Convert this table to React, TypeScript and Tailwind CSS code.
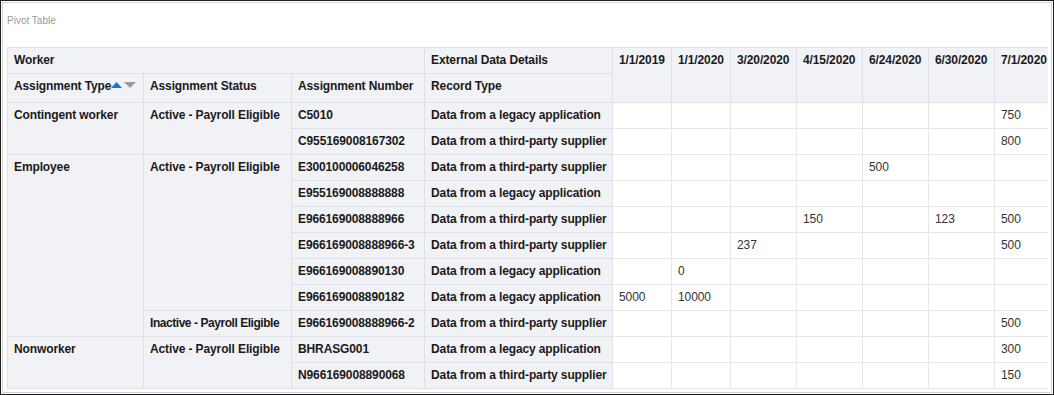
import React from "react";

type Row = {
  type?: { label: string; span: number };
  status?: { label: string; span: number };
  number: string;
  record: string;
  values: (string | number | null)[];
};

const dates = ["1/1/2019", "1/1/2020", "3/20/2020", "4/15/2020", "6/24/2020", "6/30/2020", "7/1/2020"];
const LEGACY = "Data from a legacy application";
const THIRD = "Data from a third-party supplier";

const rows: Row[] = [
  { type: { label: "Contingent worker", span: 2 }, status: { label: "Active - Payroll Eligible", span: 2 }, number: "C5010", record: LEGACY, values: [null, null, null, null, null, null, 750] },
  { number: "C955169008167302", record: THIRD, values: [null, null, null, null, null, null, 800] },
  { type: { label: "Employee", span: 7 }, status: { label: "Active - Payroll Eligible", span: 6 }, number: "E300100006046258", record: THIRD, values: [null, null, null, null, 500, null, null] },
  { number: "E955169008888888", record: LEGACY, values: [null, null, null, null, null, null, null] },
  { number: "E966169008888966", record: THIRD, values: [null, null, null, 150, null, 123, 500] },
  { number: "E966169008888966-3", record: THIRD, values: [null, null, 237, null, null, null, 500] },
  { number: "E966169008890130", record: LEGACY, values: [null, 0, null, null, null, null, null] },
  { number: "E966169008890182", record: LEGACY, values: [5000, 10000, null, null, null, null, null] },
  { status: { label: "Inactive - Payroll Eligible", span: 1 }, number: "E966169008888966-2", record: THIRD, values: [null, null, null, null, null, null, 500] },
  { type: { label: "Nonworker", span: 2 }, status: { label: "Active - Payroll Eligible", span: 2 }, number: "BHRASG001", record: LEGACY, values: [null, null, null, null, null, null, 300] },
  { number: "N966169008890068", record: THIRD, values: [null, null, null, null, null, null, 150] },
];

const head = "bg-[#f1f2f6] border border-[#dde1e7] px-[6px] pt-[5px] align-top text-left font-bold text-[#1a1a1a] whitespace-nowrap overflow-hidden";
const cell = "bg-white border border-[#e5e7ea] px-[6px] pt-[5px] align-top text-left text-[#333] whitespace-nowrap";

const SortIcons = () => (
  <span className="inline-flex items-center gap-[2px] align-middle relative -top-[2px]">
    <svg width="11" height="6" viewBox="0 0 11 6">
      <polygon points="0,6 5.5,0 11,6" fill="#1b78d0" />
    </svg>
    <svg width="12" height="6" viewBox="0 0 12 6">
      <polygon points="0,0 12,0 6,6" fill="#9a9a9a" />
    </svg>
  </span>
);

export default function App() {
  return (
    <div
      className="w-[1054px] h-[395px] border border-[#1e1e1e] p-px bg-white"
      style={{ fontFamily: '"Liberation Sans", Arial, sans-serif' }}
    >
      <div className="h-full border border-[#d4d4d4] pl-[4px] pr-[3px] flex flex-col">
        <div className="h-[44px] pt-[10px] text-[10px] text-[#9a9a9a]">Pivot Table</div>
        <div className="overflow-hidden">
          <table className="table-fixed border-collapse text-[12px] leading-[14px] tracking-[-0.12px] w-[1053px]">
            <colgroup>
              <col className="w-[136px]" />
              <col className="w-[148px]" />
              <col className="w-[133px]" />
              <col className="w-[188px]" />
              <col className="w-[59px]" />
              <col className="w-[59px]" />
              <col className="w-[66px]" />
              <col className="w-[66px]" />
              <col className="w-[66px]" />
              <col className="w-[66px]" />
              <col className="w-[66px]" />
            </colgroup>
            <thead>
              <tr className="h-[26px]">
                <th colSpan={3} className={head}>Worker</th>
                <th className={head}>External Data Details</th>
                {dates.map((d) => (
                  <th key={d} rowSpan={2} className={head}>{d}</th>
                ))}
              </tr>
              <tr className="h-[29px]">
                <th className={head}>
                  Assignment Type
                  <SortIcons />
                </th>
                <th className={head}>Assignment Status</th>
                <th className={head}>Assignment Number</th>
                <th className={head}>Record Type</th>
              </tr>
            </thead>
            <tbody>
              {rows.map((r, i) => (
                <tr key={i} className="h-[26px]">
                  {r.type && (
                    <th rowSpan={r.type.span} className={head}>{r.type.label}</th>
                  )}
                  {r.status && (
                    <th rowSpan={r.status.span} className={head}>
                      {r.status.label.startsWith("Inactive") ? (
                        <span className="tracking-[-0.45px]">{r.status.label}</span>
                      ) : (
                        r.status.label
                      )}
                    </th>
                  )}
                  <th className={head}>{r.number}</th>
                  <th className={head}>{r.record}</th>
                  {r.values.map((v, j) => (
                    <td key={j} className={cell}>{v === null ? "" : v}</td>
                  ))}
                </tr>
              ))}
            </tbody>
          </table>
        </div>
      </div>
    </div>
  );
}
